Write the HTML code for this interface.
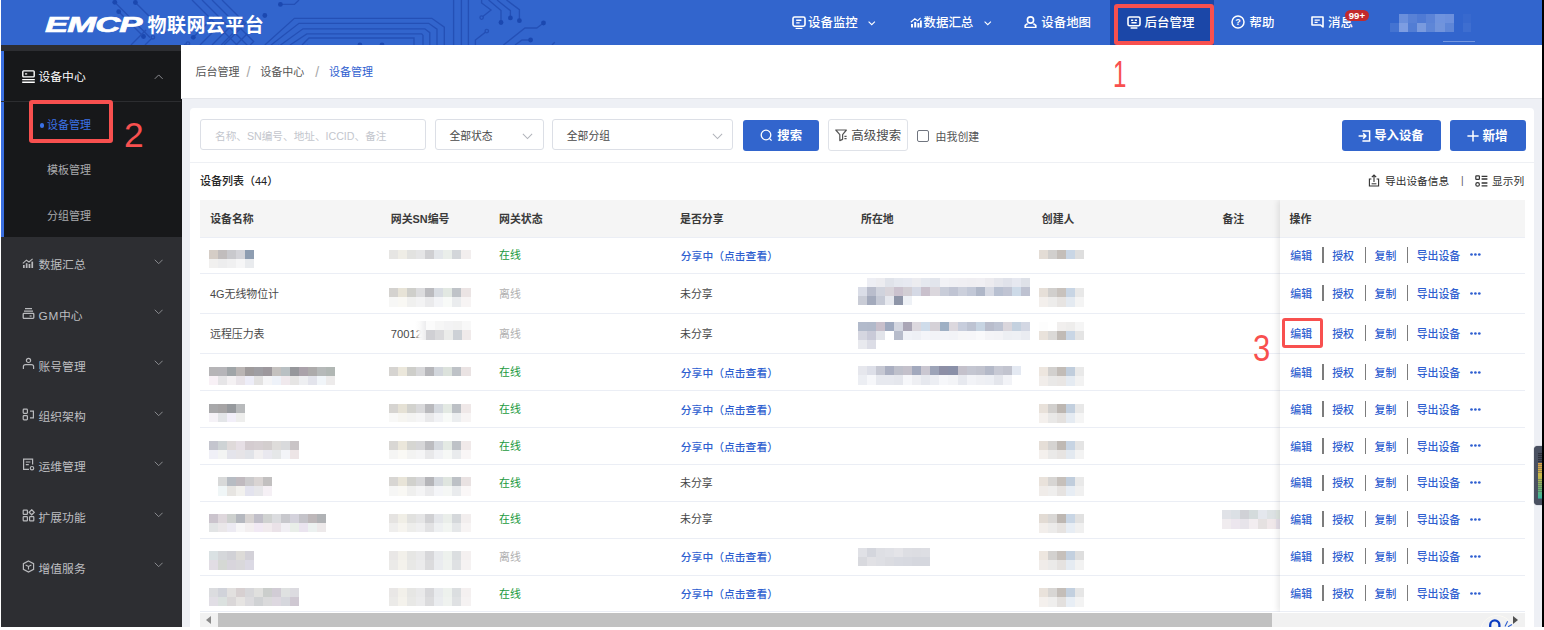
<!DOCTYPE html>
<html lang="zh-CN"><head><meta charset="utf-8"><title>EMCP 物联网云平台</title><style>
*{box-sizing:border-box;margin:0;padding:0}
html,body{width:1544px;height:630px;overflow:hidden;background:#fff}
body{font-family:"Liberation Sans","Noto Sans CJK SC",sans-serif;color:#333;position:relative;font-size:11px}
.a{position:absolute}
.t{position:absolute;white-space:nowrap;line-height:20px;height:20px}
#app{position:absolute;left:0;top:0;width:1542.3px;height:626.8px;background:#eef0f5;overflow:hidden}
#hd{position:absolute;left:0;top:0;width:1542.3px;height:44.9px;background:#3265cd;overflow:hidden}
#sb{position:absolute;left:0;top:45px;width:181.6px;height:582px;background:#2d2e32}
#sbact{position:absolute;left:0;top:5.6px;width:181.6px;height:186.2px;background:#17181a;border-left:4.3px solid #3a6fe0}
.nav{color:#fff;font-size:12.45px;font-weight:500}
.m1{color:#bdbec1;font-size:11.8px}
.m2{color:#a9aaad;font-size:11px}
.chev{position:absolute;width:9px;height:5px}
#bc{position:absolute;left:181px;top:45px;width:1361px;height:54px;background:#fff;border-bottom:1px solid #e3e5ea}
#card{position:absolute;left:190px;top:108px;width:1344px;height:530px;background:#fff;border-radius:4px}
.inp{position:absolute;top:119.3px;height:30.6px;border:1px solid #dcdfe6;border-radius:3px;background:#fff}
.btn{position:absolute;top:119.5px;height:31.4px;border-radius:3px;background:#3265cd}
.th{font-weight:700;color:#3a3a3a;font-size:10.9px}
.td{color:#484848;font-size:10.9px}
.on{color:#1b9a3e;font-size:10.9px}
.off{color:#b0b0b0;font-size:10.9px}
.lk{color:#2f5fd0;font-size:10.9px;font-weight:500}
.sep{position:absolute;width:1.4px;height:16px;background:#7c7c7c}
.hl{position:absolute;height:1px;background:#ebeef5}
.redbox{position:absolute;border:4px solid #f8504f;border-radius:2px}
.rednum{position:absolute;color:#f8504f;font-family:"Liberation Sans",sans-serif;white-space:nowrap}
</style></head><body>
<div id="app">
<div id="hd">
<svg class="a" style="left:0;top:0" width="1542" height="45" viewBox="0 0 1542 45" fill="none" stroke="#2450b6" stroke-width="1.35"><path d="M114.8 2.3 L150 37.5"/><circle cx="114.8" cy="2.3" r="2.4" fill="#1b48b0" stroke="none"/><path d="M118.7 11.7 L143.5 36.5"/><circle cx="118.7" cy="11.7" r="2.4" fill="#1b48b0" stroke="none"/><circle cx="143.5" cy="36.5" r="2.4" fill="#1b48b0" stroke="none"/><path d="M135.4 2.5 L166 33"/><circle cx="135.4" cy="2.5" r="2.4" fill="#1b48b0" stroke="none"/><path d="M131 45 L146 30"/><path d="M152.9 37.3 L145 45"/><circle cx="152.9" cy="37.3" r="1.7" fill="#3265cd"/><path d="M193.3 37.3 L214 16.6"/><circle cx="193.3" cy="37.3" r="2.4" fill="#1b48b0" stroke="none"/><path d="M187.9 43.5 L184 45"/><circle cx="187.9" cy="43.5" r="1.7" fill="#3265cd"/><path d="M192.0 0 L272.6 80.6 L308.2 45"/><path d="M202.0 0 L263.1 61.1 L279.2 45"/><path d="M212.0 0 L253.6 41.6 L250.2 45"/><path d="M222.0 0 L244.1 22.1 L221.2 45"/><circle cx="264.8" cy="15.5" r="2.4" fill="#1b48b0" stroke="none"/><path d="M200.0 45 L223.0 22"/><path d="M212.0 45 L235.0 22"/><path d="M224.0 45 L247.0 22"/><path d="M236.0 45 L259.0 22"/><path d="M280.4 4.4 H294.4 L299 0"/><circle cx="280.4" cy="4.4" r="2.4" fill="#1b48b0" stroke="none"/><path d="M264.8 45 L294.4 18.3 H431.8 L444.3 27.2 V45"/><path d="M271.0 45 L299.0 23.3 H428.7 L437.0 29.2 V45"/><path d="M280.5 45 L303.0 28.8 H424.8 L429.8 32.6 V45"/><path d="M290.0 45 L306.8 33.9 H421.7 L423.0 35.4 V45"/><path d="M302 45 L309 38 H414 V45"/><path d="M453.6 0 V45"/><path d="M461.4 0 V45"/><path d="M468.4 0 V45"/><circle cx="359.9" cy="45.0" r="2.4" fill="#1b48b0" stroke="none"/><circle cx="382.0" cy="45.0" r="2.4" fill="#1b48b0" stroke="none"/><path d="M481.6 0 V3 L491 10 L481.6 17.6"/><circle cx="481.6" cy="17.6" r="1.7" fill="#3265cd"/><path d="M488.6 0 L501 10.6 V22.5"/><circle cx="501.0" cy="22.5" r="2.4" fill="#1b48b0" stroke="none"/><path d="M497 0 L510.4 10.6 V17.9"/><circle cx="510.4" cy="17.9" r="2.4" fill="#1b48b0" stroke="none"/><path d="M506.5 0 L519.4 9.6 V20.7"/><circle cx="519.4" cy="20.7" r="2.4" fill="#1b48b0" stroke="none"/><path d="M486.8 31.1 L475.4 40 V45"/><circle cx="486.8" cy="31.1" r="1.7" fill="#3265cd"/><path d="M543.5 23 L536.8 28 H525 L503.4 45"/><circle cx="543.5" cy="23.0" r="2.4" fill="#1b48b0" stroke="none"/><path d="M530.6 40 H522 L515 45"/><circle cx="530.6" cy="40.0" r="2.4" fill="#1b48b0" stroke="none"/><path d="M554.7 42.3 L552 45"/></svg>
<div class="a" style="left:45px;top:12.6px;height:24px;line-height:24px;color:#fff;font-weight:700;font-style:italic;font-size:22.5px;transform-origin:0 50%;transform:scaleX(1.54);letter-spacing:-0.6px;white-space:nowrap;-webkit-text-stroke:0.7px #fff">EMCP</div>
<div class="a" style="left:147.5px;top:13.7px;height:24px;line-height:24px;color:#fff;font-weight:700;font-size:19px;white-space:nowrap;letter-spacing:0.45px">物联网云平台</div>
<div class="a" style="left:1110px;top:0;width:103.6px;height:45px;background:#1b47a8"></div>
<svg class="a" style="left:791.8px;top:15.7px" width="14" height="13.5" viewBox="0 0 14 13.5" fill="none" stroke="#fff" stroke-width="1.6"><rect x="1" y="1" width="12" height="9.2" rx="1.6"/><path d="M3.6 12.6h6.8" stroke-width="1.5"/><path d="M4.2 4.3h5.2M4.2 6.9h3.4" stroke-width="1.4"/></svg>
<div class="t nav" style="left:808.0px;top:12.9px;">设备监控</div>
<svg class="a" style="left:868.0px;top:21.0px" width="7.5" height="4.5" viewBox="0 0 10 6" fill="none" stroke="#fff" stroke-width="1.47"><path d="M0.8 0.8 L5 5 L9.2 0.8"/></svg>
<svg class="a" style="left:909.6px;top:17.2px" width="12" height="11" viewBox="0 0 12 11" fill="#fff" stroke="none"><rect x="1" y="7" width="2" height="3.5"/><rect x="4.2" y="5" width="2" height="5.5"/><rect x="7.4" y="6" width="2" height="4.5"/><rect x="10" y="3.5" width="1.8" height="7"/><path d="M0.8 5.2 L4.8 1.8 L7.6 3.8 L10.6 0.8" fill="none" stroke="#fff" stroke-width="1.2"/></svg>
<div class="t nav" style="left:923.5px;top:12.9px;">数据汇总</div>
<svg class="a" style="left:984.0px;top:21.0px" width="7.5" height="4.5" viewBox="0 0 10 6" fill="none" stroke="#fff" stroke-width="1.47"><path d="M0.8 0.8 L5 5 L9.2 0.8"/></svg>
<svg class="a" style="left:1023.7px;top:15.8px" width="13" height="12.5" viewBox="0 0 13 12.5" fill="none" stroke="#fff" stroke-width="1.6"><circle cx="6.5" cy="4" r="3.1"/><path d="M3.6 7.6 L1.2 9.4 V11.5 H11.8 V9.4 L9.4 7.6" stroke-linejoin="round"/></svg>
<div class="t nav" style="left:1041.3px;top:12.9px;">设备地图</div>
<svg class="a" style="left:1127.0px;top:15.6px" width="14" height="13" viewBox="0 0 14 13" fill="none" stroke="#fff" stroke-width="1.6"><rect x="1" y="1" width="12" height="8.8" rx="1.6"/><path d="M3.6 12h6.8" stroke-width="1.5"/><path d="M4 4.2h2.2M7.8 4.2h2.2M4.4 6.7h5.2" stroke-width="1.5"/></svg>
<div class="t nav" style="left:1144.6px;top:12.9px;">后台管理</div>
<svg class="a" style="left:1231.0px;top:15.2px" width="14" height="14" viewBox="0 0 14 14" fill="none" stroke="#fff" stroke-width="1.5"><circle cx="7" cy="7" r="6"/><text x="7" y="10.2" font-size="9" font-weight="700" text-anchor="middle" fill="#fff" stroke="none" font-family="Liberation Sans,sans-serif">?</text></svg>
<div class="t nav" style="left:1249.6px;top:12.9px;">帮助</div>
<svg class="a" style="left:1310.8px;top:15.6px" width="13" height="12" viewBox="0 0 13 12" fill="none" stroke="#fff" stroke-width="1.6"><path d="M1 1 H12 V11 L9.6 9 H1 Z" stroke-linejoin="round"/><path d="M3.6 4.2h5.2M3.6 6.4h3" stroke-width="1.3"/></svg>
<div class="t nav" style="left:1328.0px;top:12.9px;">消息</div>
<div class="a" style="left:1344.6px;top:9.6px;width:24.6px;height:11.3px;border-radius:6px;background:#c32a2c;color:#fff;font-size:9.6px;font-weight:700;line-height:11.6px;text-align:center">99+</div>
<svg class="a" style="left:1389.5px;top:14.0px" width="81.9" height="17.6" viewBox="0 0 81.9 17.6" shape-rendering="crispEdges"><rect x="9.1" y="0.0" width="9.3" height="9.0" fill="#6a8fdc"/><rect x="18.2" y="0.0" width="9.3" height="9.0" fill="#5881d6"/><rect x="27.3" y="0.0" width="9.3" height="9.0" fill="#4f7ad4"/><rect x="36.4" y="0.0" width="9.3" height="9.0" fill="#5b83d7"/><rect x="45.5" y="0.0" width="9.3" height="9.0" fill="#6f93de"/><rect x="54.6" y="0.0" width="9.3" height="9.0" fill="#6c90dd"/><rect x="72.8" y="0.0" width="9.3" height="9.0" fill="#3869ce"/><rect x="0.0" y="8.8" width="9.3" height="9.0" fill="#4473d1"/><rect x="9.1" y="8.8" width="9.3" height="9.0" fill="#7d9de2"/><rect x="18.2" y="8.8" width="9.3" height="9.0" fill="#527dd4"/><rect x="27.3" y="8.8" width="9.3" height="9.0" fill="#799ade"/><rect x="36.4" y="8.8" width="9.3" height="9.0" fill="#5e86d7"/><rect x="45.5" y="8.8" width="9.3" height="9.0" fill="#7194dc"/><rect x="54.6" y="8.8" width="9.3" height="9.0" fill="#5e86d7"/><rect x="72.8" y="8.8" width="9.3" height="9.0" fill="#3e6ed0"/></svg>
<div class="a" style="left:1443px;top:41px;width:32px;height:1px;background:#86a4e4;opacity:.8"></div>
<div class="redbox" style="left:1114.1px;top:3.8px;width:100px;height:41.2px;border-radius:3px"></div>
</div>
<div id="sb"><div id="sbact"></div></div>
<div class="a" style="left:0;top:101px;width:181px;height:1px;background:#2c2d30"></div>
<svg class="a" style="left:21.8px;top:69.6px" width="13" height="13" viewBox="0 0 13 13" fill="none" stroke="#fff" stroke-width="1.2"><rect x="0.8" y="0.9" width="11.4" height="6" rx="0.8" stroke-width="1.4"/><path d="M3 3.9h2.2" stroke-width="1.2"/><path d="M0.2 9.6h12.6M0.2 12.3h12.6" stroke-width="1.4"/></svg>
<div class="t m1" style="left:38.5px;top:67.2px;color:#fff;font-weight:400">设备中心</div>
<svg class="a" style="left:154.0px;top:73.6px" width="9.4" height="5.6" viewBox="0 0 10 6" fill="none" stroke="#8c8d91" stroke-width="1.06"><path d="M0.8 5.2 L5 1 L9.2 5.2"/></svg>
<div class="a" style="left:40.1px;top:123.3px;width:4.4px;height:4.4px;border-radius:50%;background:#3b72e6"></div>
<div class="t m2" style="left:47.0px;top:114.5px;color:#3b72e6">设备管理</div>
<div class="t m2" style="left:47.0px;top:160.0px;">模板管理</div>
<div class="t m2" style="left:47.0px;top:206.0px;">分组管理</div>
<svg class="a" style="left:21.8px;top:255.8px" width="13" height="13" viewBox="0 0 13 13" fill="none" stroke="#b9babd" stroke-width="1.2"><g fill="#b9babd" stroke="none"><rect x="1" y="9" width="1.7" height="3"/><rect x="3.8" y="7.2" width="1.7" height="4.8"/><rect x="6.6" y="8" width="1.7" height="4"/><rect x="9.4" y="5.6" width="1.7" height="6.4"/></g><path d="M0.8 7.4 L4.4 4.2 L7 6 L10.6 2.8" stroke-width="1.1"/></svg>
<div class="t m1" style="left:38.5px;top:254.9px;">数据汇总</div>
<svg class="a" style="left:154.0px;top:258.5px" width="9.4" height="5.6" viewBox="0 0 10 6" fill="none" stroke="#8c8d91" stroke-width="1.06"><path d="M0.8 0.8 L5 5 L9.2 0.8"/></svg>
<svg class="a" style="left:21.8px;top:306.5px" width="13" height="13" viewBox="0 0 13 13" fill="none" stroke="#b9babd" stroke-width="1.2"><path d="M3 1.6h7M2 4.2h9" stroke-width="1.3"/><rect x="1.2" y="6.4" width="10.6" height="5" rx="0.8" stroke-width="1.3"/><path d="M7.6 9h2" stroke-width="1.2"/></svg>
<div class="t m1" style="left:38.5px;top:305.6px;"><span style="letter-spacing:.7px">GM</span>中心</div>
<svg class="a" style="left:154.0px;top:309.2px" width="9.4" height="5.6" viewBox="0 0 10 6" fill="none" stroke="#8c8d91" stroke-width="1.06"><path d="M0.8 0.8 L5 5 L9.2 0.8"/></svg>
<svg class="a" style="left:21.8px;top:357.4px" width="13" height="13" viewBox="0 0 13 13" fill="none" stroke="#b9babd" stroke-width="1.2"><circle cx="6.5" cy="3.4" r="2.1"/><path d="M1.4 12 V9.6 Q1.4 7.6 3.6 7.6 H9.4 Q11.6 7.6 11.6 9.6 V12"/></svg>
<div class="t m1" style="left:38.5px;top:356.5px;">账号管理</div>
<svg class="a" style="left:154.0px;top:360.1px" width="9.4" height="5.6" viewBox="0 0 10 6" fill="none" stroke="#8c8d91" stroke-width="1.06"><path d="M0.8 0.8 L5 5 L9.2 0.8"/></svg>
<svg class="a" style="left:21.8px;top:407.8px" width="13" height="13" viewBox="0 0 13 13" fill="none" stroke="#b9babd" stroke-width="1.2"><rect x="1.2" y="1.2" width="4.2" height="4.2" rx="0.8"/><rect x="1.2" y="7.6" width="4.2" height="4.2" rx="0.8"/><path d="M8 3.2 H11.4 V9.8 H8"/></svg>
<div class="t m1" style="left:38.5px;top:406.9px;">组织架构</div>
<svg class="a" style="left:154.0px;top:410.5px" width="9.4" height="5.6" viewBox="0 0 10 6" fill="none" stroke="#8c8d91" stroke-width="1.06"><path d="M0.8 0.8 L5 5 L9.2 0.8"/></svg>
<svg class="a" style="left:21.8px;top:458.3px" width="13" height="13" viewBox="0 0 13 13" fill="none" stroke="#b9babd" stroke-width="1.2"><path d="M10.6 6.4 V1.2 H1.6 V11.4 H7"/><path d="M3.8 4h4.6M3.8 6.6h3" stroke-width="1.1"/><circle cx="10" cy="10.2" r="1.7"/></svg>
<div class="t m1" style="left:38.5px;top:457.4px;">运维管理</div>
<svg class="a" style="left:154.0px;top:461.0px" width="9.4" height="5.6" viewBox="0 0 10 6" fill="none" stroke="#8c8d91" stroke-width="1.06"><path d="M0.8 0.8 L5 5 L9.2 0.8"/></svg>
<svg class="a" style="left:21.8px;top:508.9px" width="13" height="13" viewBox="0 0 13 13" fill="none" stroke="#b9babd" stroke-width="1.2"><rect x="1.2" y="1.2" width="4.2" height="4.2" rx="0.6"/><rect x="1.2" y="7.6" width="4.2" height="4.2" rx="0.6"/><rect x="7.6" y="7.6" width="4.2" height="4.2" rx="0.6"/><path d="M9.7 0.8 L12.3 3.3 L9.7 5.8 L7.1 3.3 Z"/></svg>
<div class="t m1" style="left:38.5px;top:508.0px;">扩展功能</div>
<svg class="a" style="left:154.0px;top:511.6px" width="9.4" height="5.6" viewBox="0 0 10 6" fill="none" stroke="#8c8d91" stroke-width="1.06"><path d="M0.8 0.8 L5 5 L9.2 0.8"/></svg>
<svg class="a" style="left:21.8px;top:559.5px" width="13" height="13" viewBox="0 0 13 13" fill="none" stroke="#b9babd" stroke-width="1.2"><path d="M6.5 1 L11.6 3.6 V9.4 L6.5 12 L1.4 9.4 V3.6 Z"/><path d="M3.6 5 L6.5 6.5 L9.4 5 M6.5 6.5 V9.6" stroke-width="1.1"/></svg>
<div class="t m1" style="left:38.5px;top:558.6px;">增值服务</div>
<svg class="a" style="left:154.0px;top:562.2px" width="9.4" height="5.6" viewBox="0 0 10 6" fill="none" stroke="#8c8d91" stroke-width="1.06"><path d="M0.8 0.8 L5 5 L9.2 0.8"/></svg>
<div class="redbox" style="left:29.2px;top:100.2px;width:84.2px;height:43.3px;border-radius:3px"></div>
<div class="rednum" style="left:124px;top:113.2px;font-size:35.4px;line-height:44px;transform-origin:0 50%;transform:scaleX(1.0)">2</div>
<div id="bc"></div>
<div class="t " style="left:195.5px;top:61.7px;color:#555;font-size:11px">后台管理</div>
<div class="t " style="left:246.6px;top:61.7px;color:#a8a8a8;font-size:14px">/</div>
<div class="t " style="left:260.3px;top:61.7px;color:#555;font-size:11px">设备中心</div>
<div class="t " style="left:315.2px;top:61.7px;color:#a8a8a8;font-size:14px">/</div>
<div class="t " style="left:329.0px;top:61.7px;color:#2f5fd0;font-size:11px">设备管理</div>
<div class="rednum" style="left:1113px;top:53.2px;font-size:36.5px;line-height:44px;transform-origin:0 50%;transform:scaleX(0.66)">1</div>
<div id="card"></div>
<div class="inp" style="left:200px;width:226px"></div>
<div class="t " style="left:215.0px;top:126.0px;color:#c3c6cd;font-size:10.65px">名称、SN编号、地址、ICCID、备注</div>
<div class="inp" style="left:435px;width:109px"></div>
<div class="t " style="left:449.4px;top:126.0px;color:#4a4a4a;font-size:10.8px">全部状态</div>
<svg class="a" style="left:521.8px;top:133.2px" width="11.0" height="6.6" viewBox="0 0 10 6" fill="none" stroke="#b0b3ba" stroke-width="0.91"><path d="M0.8 0.8 L5 5 L9.2 0.8"/></svg>
<div class="inp" style="left:552px;width:181px"></div>
<div class="t " style="left:566.8px;top:126.0px;color:#4a4a4a;font-size:10.8px">全部分组</div>
<svg class="a" style="left:712.2px;top:133.2px" width="11.0" height="6.6" viewBox="0 0 10 6" fill="none" stroke="#b0b3ba" stroke-width="0.91"><path d="M0.8 0.8 L5 5 L9.2 0.8"/></svg>
<div class="btn" style="left:743px;width:76px"></div>
<svg class="a" style="left:759.5px;top:129px" width="13" height="13" viewBox="0 0 13 13" fill="none" stroke="#fff" stroke-width="1.3"><circle cx="6" cy="6" r="4.8"/><path d="M9.6 9.6 L11.6 11.6"/></svg>
<div class="t " style="left:777.3px;top:125.6px;color:#fff;font-weight:700;font-size:12.4px">搜索</div>
<div class="inp" style="left:828.2px;width:79.6px;height:31.8px;border-color:#dfe2e8"></div>
<svg class="a" style="left:834.6px;top:129.4px" width="13" height="13" viewBox="0 0 13 13" fill="none" stroke="#555" stroke-width="1.2"><path d="M0.8 1 H11.4 L7.6 5.6 V10.4 L4.8 11.6 V5.6 Z" stroke-linejoin="round"/><path d="M9.4 7.4h2.2M9.4 9.6h2.2" stroke-width="1.1"/></svg>
<div class="t " style="left:851.2px;top:125.8px;color:#4c4c4c;font-weight:400;font-size:12.5px">高级搜索</div>
<div class="a" style="left:917px;top:130px;width:12.4px;height:12.2px;border:1.2px solid #70757f;border-radius:2px;background:#fff"></div>
<div class="t " style="left:935.6px;top:126.6px;color:#555;font-size:10.9px">由我创建</div>
<div class="btn" style="left:1341.5px;width:99.5px"></div>
<svg class="a" style="left:1357.5px;top:129.5px" width="13" height="12" viewBox="0 0 13 12" fill="none" stroke="#fff" stroke-width="1.5"><path d="M4.4 1 H11.6 V11 H4.4"/><path d="M0.6 6 H7.6 M5.2 3.4 L7.8 6 L5.2 8.6"/></svg>
<div class="t " style="left:1374.2px;top:125.6px;color:#fff;font-weight:700;font-size:12.4px">导入设备</div>
<div class="btn" style="left:1450px;width:75.5px"></div>
<svg class="a" style="left:1467px;top:130px" width="12" height="12" viewBox="0 0 12 12" fill="none" stroke="#fff" stroke-width="1.5"><path d="M6 0.4 V11.6 M0.4 6 H11.6"/></svg>
<div class="t " style="left:1482.4px;top:125.6px;color:#fff;font-weight:700;font-size:12.6px">新增</div>
<div class="hl" style="left:190px;top:162px;width:1344px;background:#eef0f4"></div>
<div class="t " style="left:200.0px;top:170.9px;color:#222;font-weight:500;font-size:11px">设备列表（44）</div>
<svg class="a" style="left:1368px;top:174px" width="12" height="13" viewBox="0 0 12 13" fill="none" stroke="#333" stroke-width="1.1"><path d="M3.4 5 H1.4 V12 H10.6 V5 H8.6"/><path d="M6 8 V1.2 M3.8 3.2 L6 1 L8.2 3.2"/><path d="M3.6 9.8h4.8" stroke-width="1"/></svg>
<div class="t " style="left:1385.0px;top:171.0px;color:#2e2e2e;font-weight:400;font-size:10.7px">导出设备信息</div>
<div class="t " style="left:1461.0px;top:170.5px;color:#555;font-size:10px">|</div>
<svg class="a" style="left:1475px;top:174.5px" width="13" height="12" viewBox="0 0 13 12" fill="none" stroke="#333" stroke-width="1.2"><rect x="0.8" y="0.8" width="3.6" height="3.6" rx="0.6"/><circle cx="2.6" cy="9.4" r="1.8"/><path d="M6.6 1.4h5.8M6.6 4h5.8M6.6 8h5.8M6.6 10.8h5.8" stroke-width="1.3"/></svg>
<div class="t " style="left:1492.0px;top:171.0px;color:#2e2e2e;font-weight:400;font-size:10.7px">显示列</div>
<div class="a" style="left:200px;top:200px;width:1325px;height:37px;background:#f5f5f5"></div>
<div class="t th" style="left:210.2px;top:208.5px;">设备名称</div>
<div class="t th" style="left:390.8px;top:208.5px;">网关SN编号</div>
<div class="t th" style="left:499.0px;top:208.5px;">网关状态</div>
<div class="t th" style="left:680.0px;top:208.5px;">是否分享</div>
<div class="t th" style="left:861.0px;top:208.5px;">所在地</div>
<div class="t th" style="left:1041.8px;top:208.5px;">创建人</div>
<div class="t th" style="left:1222.4px;top:208.5px;">备注</div>
<div class="hl" style="left:200px;top:236.9px;width:1325px"></div>
<div class="hl" style="left:200px;top:272.9px;width:1325px"></div>
<div class="hl" style="left:200px;top:312.9px;width:1325px"></div>
<div class="hl" style="left:200px;top:353.4px;width:1325px"></div>
<div class="hl" style="left:200px;top:390.2px;width:1325px"></div>
<div class="hl" style="left:200px;top:427.4px;width:1325px"></div>
<div class="hl" style="left:200px;top:464.2px;width:1325px"></div>
<div class="hl" style="left:200px;top:500.5px;width:1325px"></div>
<div class="hl" style="left:200px;top:537.6px;width:1325px"></div>
<div class="hl" style="left:200px;top:574.6px;width:1325px"></div>
<div class="hl" style="left:200px;top:611.3px;width:1325px"></div>
<div class="t on" style="left:499.0px;top:245.2px;">在线</div>
<div class="t lk" style="left:680.8px;top:246.0px;font-size:10.75px;font-weight:500;letter-spacing:0.05px">分享中（点击查看）</div>
<div class="t td" style="left:210.0px;top:283.6px;">4G无线物位计</div>
<div class="t off" style="left:499.0px;top:283.6px;">离线</div>
<div class="t td" style="left:680.0px;top:283.6px;">未分享</div>
<div class="t td" style="left:210.0px;top:323.6px;">远程压力表</div>
<div class="t off" style="left:499.0px;top:323.6px;">离线</div>
<div class="t td" style="left:680.0px;top:323.6px;">未分享</div>
<div class="t on" style="left:499.0px;top:362.4px;">在线</div>
<div class="t lk" style="left:680.8px;top:363.2px;font-size:10.75px;font-weight:500;letter-spacing:0.05px">分享中（点击查看）</div>
<div class="t on" style="left:499.0px;top:399.4px;">在线</div>
<div class="t lk" style="left:680.8px;top:400.2px;font-size:10.75px;font-weight:500;letter-spacing:0.05px">分享中（点击查看）</div>
<div class="t on" style="left:499.0px;top:436.2px;">在线</div>
<div class="t lk" style="left:680.8px;top:437.0px;font-size:10.75px;font-weight:500;letter-spacing:0.05px">分享中（点击查看）</div>
<div class="t on" style="left:499.0px;top:472.7px;">在线</div>
<div class="t td" style="left:680.0px;top:472.7px;">未分享</div>
<div class="t on" style="left:499.0px;top:509.4px;">在线</div>
<div class="t td" style="left:680.0px;top:509.4px;">未分享</div>
<div class="t off" style="left:499.0px;top:546.6px;">离线</div>
<div class="t lk" style="left:680.8px;top:547.4px;font-size:10.75px;font-weight:500;letter-spacing:0.05px">分享中（点击查看）</div>
<div class="t on" style="left:499.0px;top:583.5px;">在线</div>
<div class="t lk" style="left:680.8px;top:584.3px;font-size:10.75px;font-weight:500;letter-spacing:0.05px">分享中（点击查看）</div>
<svg class="a" style="left:209.4px;top:249.8px" width="45.0" height="18.4" viewBox="0 0 45.0 18.4" shape-rendering="crispEdges"><rect x="0.0" y="0.0" width="9.2" height="9.4" fill="#d5cdc6"/><rect x="9.0" y="0.0" width="9.2" height="9.4" fill="#c1bdbd"/><rect x="18.0" y="0.0" width="9.2" height="9.4" fill="#c9c9cd"/><rect x="27.0" y="0.0" width="9.2" height="9.4" fill="#d4d4d9"/><rect x="36.0" y="0.0" width="9.2" height="9.4" fill="#8e9db1"/><rect x="0.0" y="9.2" width="9.2" height="9.4" fill="#f1f0ef"/><rect x="9.0" y="9.2" width="9.2" height="9.4" fill="#ededee"/><rect x="18.0" y="9.2" width="9.2" height="9.4" fill="#f0f0f1"/><rect x="27.0" y="9.2" width="9.2" height="9.4" fill="#f6f6f7"/><rect x="36.0" y="9.2" width="9.2" height="9.4" fill="#e9ebee"/></svg>
<svg class="a" style="left:209.4px;top:367.0px" width="126.0" height="18.4" viewBox="0 0 126.0 18.4" shape-rendering="crispEdges"><rect x="0.0" y="0.0" width="9.2" height="9.4" fill="#b6b5b7"/><rect x="9.0" y="0.0" width="9.2" height="9.4" fill="#b6b5b9"/><rect x="18.0" y="0.0" width="9.2" height="9.4" fill="#a0a5a8"/><rect x="27.0" y="0.0" width="9.2" height="9.4" fill="#bab5b4"/><rect x="36.0" y="0.0" width="9.2" height="9.4" fill="#9f9b9c"/><rect x="45.0" y="0.0" width="9.2" height="9.4" fill="#9f9ea3"/><rect x="54.0" y="0.0" width="9.2" height="9.4" fill="#9d989d"/><rect x="63.0" y="0.0" width="9.2" height="9.4" fill="#c4c1bf"/><rect x="72.0" y="0.0" width="9.2" height="9.4" fill="#b9c0c3"/><rect x="81.0" y="0.0" width="9.2" height="9.4" fill="#96979b"/><rect x="90.0" y="0.0" width="9.2" height="9.4" fill="#aaa2aa"/><rect x="99.0" y="0.0" width="9.2" height="9.4" fill="#adabab"/><rect x="108.0" y="0.0" width="9.2" height="9.4" fill="#b6b9b9"/><rect x="117.0" y="0.0" width="9.2" height="9.4" fill="#b1b7b4"/><rect x="0.0" y="9.2" width="9.2" height="9.4" fill="#f8f1f6"/><rect x="9.0" y="9.2" width="9.2" height="9.4" fill="#e6e5e7"/><rect x="18.0" y="9.2" width="9.2" height="9.4" fill="#f4f1f3"/><rect x="27.0" y="9.2" width="9.2" height="9.4" fill="#e9e4e9"/><rect x="36.0" y="9.2" width="9.2" height="9.4" fill="#ededf8"/><rect x="45.0" y="9.2" width="9.2" height="9.4" fill="#e3e2e2"/><rect x="54.0" y="9.2" width="9.2" height="9.4" fill="#f5f5f7"/><rect x="63.0" y="9.2" width="9.2" height="9.4" fill="#eef2f9"/><rect x="72.0" y="9.2" width="9.2" height="9.4" fill="#f0e9ed"/><rect x="81.0" y="9.2" width="9.2" height="9.4" fill="#e6e5e4"/><rect x="90.0" y="9.2" width="9.2" height="9.4" fill="#eeeff2"/><rect x="99.0" y="9.2" width="9.2" height="9.4" fill="#e3e4ec"/><rect x="108.0" y="9.2" width="9.2" height="9.4" fill="#f1f5f9"/><rect x="117.0" y="9.2" width="9.2" height="9.4" fill="#edebeb"/></svg>
<svg class="a" style="left:209.4px;top:404.0px" width="36.0" height="18.4" viewBox="0 0 36.0 18.4" shape-rendering="crispEdges"><rect x="0.0" y="0.0" width="9.2" height="9.4" fill="#a8a8aa"/><rect x="9.0" y="0.0" width="9.2" height="9.4" fill="#a6a4a5"/><rect x="18.0" y="0.0" width="9.2" height="9.4" fill="#96999d"/><rect x="27.0" y="0.0" width="9.2" height="9.4" fill="#b8babc"/><rect x="0.0" y="9.2" width="9.2" height="9.4" fill="#f5f2f7"/><rect x="9.0" y="9.2" width="9.2" height="9.4" fill="#e3e5e8"/><rect x="18.0" y="9.2" width="9.2" height="9.4" fill="#f2eff9"/><rect x="27.0" y="9.2" width="9.2" height="9.4" fill="#eeeeed"/></svg>
<svg class="a" style="left:209.4px;top:440.8px" width="90.0" height="18.4" viewBox="0 0 90.0 18.4" shape-rendering="crispEdges"><rect x="0.0" y="0.0" width="9.2" height="9.4" fill="#c4c5ce"/><rect x="9.0" y="0.0" width="9.2" height="9.4" fill="#ced3d5"/><rect x="18.0" y="0.0" width="9.2" height="9.4" fill="#dfdada"/><rect x="27.0" y="0.0" width="9.2" height="9.4" fill="#e6dfe5"/><rect x="36.0" y="0.0" width="9.2" height="9.4" fill="#d4ccd0"/><rect x="45.0" y="0.0" width="9.2" height="9.4" fill="#d6cfd2"/><rect x="54.0" y="0.0" width="9.2" height="9.4" fill="#d3cece"/><rect x="63.0" y="0.0" width="9.2" height="9.4" fill="#dedcda"/><rect x="72.0" y="0.0" width="9.2" height="9.4" fill="#d9dadc"/><rect x="81.0" y="0.0" width="9.2" height="9.4" fill="#c9c4c6"/><rect x="0.0" y="9.2" width="9.2" height="9.4" fill="#f0f0f7"/><rect x="9.0" y="9.2" width="9.2" height="9.4" fill="#f3f4f3"/><rect x="18.0" y="9.2" width="9.2" height="9.4" fill="#e4e4eb"/><rect x="27.0" y="9.2" width="9.2" height="9.4" fill="#e6e4e7"/><rect x="36.0" y="9.2" width="9.2" height="9.4" fill="#e1e3e8"/><rect x="45.0" y="9.2" width="9.2" height="9.4" fill="#f1eff0"/><rect x="54.0" y="9.2" width="9.2" height="9.4" fill="#e9e8ef"/><rect x="63.0" y="9.2" width="9.2" height="9.4" fill="#e5e7e8"/><rect x="72.0" y="9.2" width="9.2" height="9.4" fill="#f3f4f8"/><rect x="81.0" y="9.2" width="9.2" height="9.4" fill="#ede5e6"/></svg>
<svg class="a" style="left:218.0px;top:477.3px" width="54.0" height="18.4" viewBox="0 0 54.0 18.4" shape-rendering="crispEdges"><rect x="0.0" y="0.0" width="9.2" height="9.4" fill="#d8d9d9"/><rect x="9.0" y="0.0" width="9.2" height="9.4" fill="#b7bcc3"/><rect x="18.0" y="0.0" width="9.2" height="9.4" fill="#c0babf"/><rect x="27.0" y="0.0" width="9.2" height="9.4" fill="#cbcacc"/><rect x="36.0" y="0.0" width="9.2" height="9.4" fill="#d9d4d3"/><rect x="45.0" y="0.0" width="9.2" height="9.4" fill="#c2c0c0"/><rect x="0.0" y="9.2" width="9.2" height="9.4" fill="#f0f6f7"/><rect x="9.0" y="9.2" width="9.2" height="9.4" fill="#e7e5e2"/><rect x="18.0" y="9.2" width="9.2" height="9.4" fill="#f2f1ee"/><rect x="27.0" y="9.2" width="9.2" height="9.4" fill="#e3e3ee"/><rect x="36.0" y="9.2" width="9.2" height="9.4" fill="#e7e7ea"/><rect x="45.0" y="9.2" width="9.2" height="9.4" fill="#f5f0f5"/></svg>
<svg class="a" style="left:209.4px;top:514.0px" width="117.0" height="18.4" viewBox="0 0 117.0 18.4" shape-rendering="crispEdges"><rect x="0.0" y="0.0" width="9.2" height="9.4" fill="#cbc4cd"/><rect x="9.0" y="0.0" width="9.2" height="9.4" fill="#ded7dc"/><rect x="18.0" y="0.0" width="9.2" height="9.4" fill="#cdd0ce"/><rect x="27.0" y="0.0" width="9.2" height="9.4" fill="#b5b8bf"/><rect x="36.0" y="0.0" width="9.2" height="9.4" fill="#d7d3d2"/><rect x="45.0" y="0.0" width="9.2" height="9.4" fill="#c1bfc9"/><rect x="54.0" y="0.0" width="9.2" height="9.4" fill="#d0d2d1"/><rect x="63.0" y="0.0" width="9.2" height="9.4" fill="#dbdcdf"/><rect x="72.0" y="0.0" width="9.2" height="9.4" fill="#c8c8cd"/><rect x="81.0" y="0.0" width="9.2" height="9.4" fill="#d4d2dc"/><rect x="90.0" y="0.0" width="9.2" height="9.4" fill="#c4c3c9"/><rect x="99.0" y="0.0" width="9.2" height="9.4" fill="#bdb7b9"/><rect x="108.0" y="0.0" width="9.2" height="9.4" fill="#b0b2b5"/><rect x="0.0" y="9.2" width="9.2" height="9.4" fill="#e2e4e5"/><rect x="9.0" y="9.2" width="9.2" height="9.4" fill="#eae7e9"/><rect x="18.0" y="9.2" width="9.2" height="9.4" fill="#eceaf2"/><rect x="27.0" y="9.2" width="9.2" height="9.4" fill="#f7f6f7"/><rect x="36.0" y="9.2" width="9.2" height="9.4" fill="#f3eff0"/><rect x="45.0" y="9.2" width="9.2" height="9.4" fill="#f1e9f4"/><rect x="54.0" y="9.2" width="9.2" height="9.4" fill="#f1ebee"/><rect x="63.0" y="9.2" width="9.2" height="9.4" fill="#eae2e8"/><rect x="72.0" y="9.2" width="9.2" height="9.4" fill="#f1eff4"/><rect x="81.0" y="9.2" width="9.2" height="9.4" fill="#e9eee9"/><rect x="90.0" y="9.2" width="9.2" height="9.4" fill="#eae4ef"/><rect x="99.0" y="9.2" width="9.2" height="9.4" fill="#ecf1f0"/><rect x="108.0" y="9.2" width="9.2" height="9.4" fill="#ede9ea"/></svg>
<svg class="a" style="left:209.4px;top:551.2px" width="45.0" height="18.4" viewBox="0 0 45.0 18.4" shape-rendering="crispEdges"><rect x="0.0" y="0.0" width="9.2" height="9.4" fill="#dae1e3"/><rect x="9.0" y="0.0" width="9.2" height="9.4" fill="#d5d7da"/><rect x="18.0" y="0.0" width="9.2" height="9.4" fill="#d1d1d6"/><rect x="27.0" y="0.0" width="9.2" height="9.4" fill="#dddbd8"/><rect x="36.0" y="0.0" width="9.2" height="9.4" fill="#d3d1d8"/><rect x="0.0" y="9.2" width="9.2" height="9.4" fill="#e1dde4"/><rect x="9.0" y="9.2" width="9.2" height="9.4" fill="#d5d8d4"/><rect x="18.0" y="9.2" width="9.2" height="9.4" fill="#d8d5dc"/><rect x="27.0" y="9.2" width="9.2" height="9.4" fill="#d9d8db"/><rect x="36.0" y="9.2" width="9.2" height="9.4" fill="#dbd9e4"/></svg>
<svg class="a" style="left:209.4px;top:588.1px" width="90.0" height="18.4" viewBox="0 0 90.0 18.4" shape-rendering="crispEdges"><rect x="0.0" y="0.0" width="9.2" height="9.4" fill="#dbdcdf"/><rect x="9.0" y="0.0" width="9.2" height="9.4" fill="#d1d3da"/><rect x="18.0" y="0.0" width="9.2" height="9.4" fill="#e2e0df"/><rect x="27.0" y="0.0" width="9.2" height="9.4" fill="#d7d0d1"/><rect x="36.0" y="0.0" width="9.2" height="9.4" fill="#d7d7da"/><rect x="45.0" y="0.0" width="9.2" height="9.4" fill="#e0e0de"/><rect x="54.0" y="0.0" width="9.2" height="9.4" fill="#cbcecc"/><rect x="63.0" y="0.0" width="9.2" height="9.4" fill="#d1ccd5"/><rect x="72.0" y="0.0" width="9.2" height="9.4" fill="#dfe1e1"/><rect x="81.0" y="0.0" width="9.2" height="9.4" fill="#dcdbe0"/><rect x="0.0" y="9.2" width="9.2" height="9.4" fill="#e1dee5"/><rect x="9.0" y="9.2" width="9.2" height="9.4" fill="#dbe1df"/><rect x="18.0" y="9.2" width="9.2" height="9.4" fill="#dad7d8"/><rect x="27.0" y="9.2" width="9.2" height="9.4" fill="#e6e4e2"/><rect x="36.0" y="9.2" width="9.2" height="9.4" fill="#dcdbde"/><rect x="45.0" y="9.2" width="9.2" height="9.4" fill="#d0d2d4"/><rect x="54.0" y="9.2" width="9.2" height="9.4" fill="#dadadb"/><rect x="63.0" y="9.2" width="9.2" height="9.4" fill="#ddd8e0"/><rect x="72.0" y="9.2" width="9.2" height="9.4" fill="#d6d7dd"/><rect x="81.0" y="9.2" width="9.2" height="9.4" fill="#cfc8d2"/></svg>
<svg class="a" style="left:389.0px;top:249.8px" width="81.5" height="9.2" viewBox="0 0 81.5 9.2" shape-rendering="crispEdges"><rect x="0.0" y="0.0" width="9.2" height="9.4" fill="#e6e5e3"/><rect x="9.1" y="0.0" width="9.2" height="9.4" fill="#efede6"/><rect x="18.1" y="0.0" width="9.2" height="9.4" fill="#e2e2e0"/><rect x="27.2" y="0.0" width="9.2" height="9.4" fill="#e5e5e6"/><rect x="36.2" y="0.0" width="9.2" height="9.4" fill="#cfcfd2"/><rect x="45.2" y="0.0" width="9.2" height="9.4" fill="#e3e6ea"/><rect x="54.3" y="0.0" width="9.2" height="9.4" fill="#eaeeea"/><rect x="63.4" y="0.0" width="9.2" height="9.4" fill="#d3d6da"/><rect x="72.4" y="0.0" width="9.2" height="9.4" fill="#f2eeee"/></svg>
<svg class="a" style="left:389.0px;top:288.2px" width="81.5" height="18.4" viewBox="0 0 81.5 18.4" shape-rendering="crispEdges"><rect x="0.0" y="0.0" width="9.2" height="9.4" fill="#d4d2cf"/><rect x="9.1" y="0.0" width="9.2" height="9.4" fill="#e7e3d7"/><rect x="18.1" y="0.0" width="9.2" height="9.4" fill="#cfcfcb"/><rect x="27.2" y="0.0" width="9.2" height="9.4" fill="#dcdcde"/><rect x="36.2" y="0.0" width="9.2" height="9.4" fill="#bbbbbf"/><rect x="45.2" y="0.0" width="9.2" height="9.4" fill="#d8dce2"/><rect x="54.3" y="0.0" width="9.2" height="9.4" fill="#e2e8e2"/><rect x="63.4" y="0.0" width="9.2" height="9.4" fill="#bfc3c8"/><rect x="72.4" y="0.0" width="9.2" height="9.4" fill="#ebe4e4"/><rect x="0.0" y="9.2" width="9.2" height="9.4" fill="#f7f7f6"/><rect x="9.1" y="9.2" width="9.2" height="9.4" fill="#f9f8f4"/><rect x="18.1" y="9.2" width="9.2" height="9.4" fill="#f0f0ef"/><rect x="27.2" y="9.2" width="9.2" height="9.4" fill="#f3f3f4"/><rect x="36.2" y="9.2" width="9.2" height="9.4" fill="#eaeaec"/><rect x="45.2" y="9.2" width="9.2" height="9.4" fill="#f3f4f7"/><rect x="54.3" y="9.2" width="9.2" height="9.4" fill="#f8faf8"/><rect x="63.4" y="9.2" width="9.2" height="9.4" fill="#eaecee"/><rect x="72.4" y="9.2" width="9.2" height="9.4" fill="#f7f4f4"/></svg>
<div class="t td" style="left:390.8px;top:323.6px;font-size:11.2px">70012</div>
<svg class="a" style="left:416.6px;top:321.2px" width="54.3" height="18.4" viewBox="0 0 54.3 18.4" shape-rendering="crispEdges"><rect x="9.1" y="0.0" width="9.2" height="9.4" fill="#fbfbfb"/><rect x="18.1" y="0.0" width="9.2" height="9.4" fill="#f6f6f6"/><rect x="27.2" y="0.0" width="9.2" height="9.4" fill="#f3f3f4"/><rect x="36.2" y="0.0" width="9.2" height="9.4" fill="#f2f2f2"/><rect x="45.2" y="0.0" width="9.2" height="9.4" fill="#f8f8f8"/><rect x="9.1" y="9.2" width="9.2" height="9.4" fill="#d0d0d4"/><rect x="18.1" y="9.2" width="9.2" height="9.4" fill="#dadadc"/><rect x="27.2" y="9.2" width="9.2" height="9.4" fill="#ebecea"/><rect x="36.2" y="9.2" width="9.2" height="9.4" fill="#cdd1d6"/><rect x="45.2" y="9.2" width="9.2" height="9.4" fill="#f0eaea"/></svg>
<div class="a" style="left:414.6px;top:321.2px;width:11px;height:18.4px;background:linear-gradient(90deg,rgba(255,255,255,0),rgba(250,250,250,.95) 45%,#ececee)"></div>
<svg class="a" style="left:389.0px;top:367.0px" width="81.5" height="9.2" viewBox="0 0 81.5 9.2" shape-rendering="crispEdges"><rect x="0.0" y="0.0" width="9.2" height="9.4" fill="#d6d4d1"/><rect x="9.1" y="0.0" width="9.2" height="9.4" fill="#ebe7db"/><rect x="18.1" y="0.0" width="9.2" height="9.4" fill="#cececa"/><rect x="27.2" y="0.0" width="9.2" height="9.4" fill="#d8d8da"/><rect x="36.2" y="0.0" width="9.2" height="9.4" fill="#b6b6ba"/><rect x="45.2" y="0.0" width="9.2" height="9.4" fill="#d2d6dc"/><rect x="54.3" y="0.0" width="9.2" height="9.4" fill="#dce2dc"/><rect x="63.4" y="0.0" width="9.2" height="9.4" fill="#bec2c7"/><rect x="72.4" y="0.0" width="9.2" height="9.4" fill="#eae3e3"/></svg>
<svg class="a" style="left:389.0px;top:404.0px" width="81.5" height="18.4" viewBox="0 0 81.5 18.4" shape-rendering="crispEdges"><rect x="0.0" y="0.0" width="9.2" height="9.4" fill="#d6d4d1"/><rect x="9.1" y="0.0" width="9.2" height="9.4" fill="#e5e1d5"/><rect x="18.1" y="0.0" width="9.2" height="9.4" fill="#d2d2ce"/><rect x="27.2" y="0.0" width="9.2" height="9.4" fill="#d9d9db"/><rect x="36.2" y="0.0" width="9.2" height="9.4" fill="#b9b9bd"/><rect x="45.2" y="0.0" width="9.2" height="9.4" fill="#d5d9df"/><rect x="54.3" y="0.0" width="9.2" height="9.4" fill="#e3e9e3"/><rect x="63.4" y="0.0" width="9.2" height="9.4" fill="#bcc0c5"/><rect x="72.4" y="0.0" width="9.2" height="9.4" fill="#efe8e8"/><rect x="0.0" y="9.2" width="9.2" height="9.4" fill="#f8f8f7"/><rect x="9.1" y="9.2" width="9.2" height="9.4" fill="#f6f5f1"/><rect x="18.1" y="9.2" width="9.2" height="9.4" fill="#f3f3f2"/><rect x="27.2" y="9.2" width="9.2" height="9.4" fill="#f5f5f6"/><rect x="36.2" y="9.2" width="9.2" height="9.4" fill="#e9e9eb"/><rect x="45.2" y="9.2" width="9.2" height="9.4" fill="#f1f2f5"/><rect x="54.3" y="9.2" width="9.2" height="9.4" fill="#f8faf8"/><rect x="63.4" y="9.2" width="9.2" height="9.4" fill="#ebedef"/><rect x="72.4" y="9.2" width="9.2" height="9.4" fill="#f7f4f4"/></svg>
<svg class="a" style="left:389.0px;top:440.8px" width="81.5" height="18.4" viewBox="0 0 81.5 18.4" shape-rendering="crispEdges"><rect x="0.0" y="0.0" width="9.2" height="9.4" fill="#d9d7d4"/><rect x="9.1" y="0.0" width="9.2" height="9.4" fill="#ebe7db"/><rect x="18.1" y="0.0" width="9.2" height="9.4" fill="#d6d6d2"/><rect x="27.2" y="0.0" width="9.2" height="9.4" fill="#d6d6d8"/><rect x="36.2" y="0.0" width="9.2" height="9.4" fill="#bcbcc0"/><rect x="45.2" y="0.0" width="9.2" height="9.4" fill="#d5d9df"/><rect x="54.3" y="0.0" width="9.2" height="9.4" fill="#e4eae4"/><rect x="63.4" y="0.0" width="9.2" height="9.4" fill="#bec2c7"/><rect x="72.4" y="0.0" width="9.2" height="9.4" fill="#f0e9e9"/><rect x="0.0" y="9.2" width="9.2" height="9.4" fill="#f5f5f4"/><rect x="9.1" y="9.2" width="9.2" height="9.4" fill="#faf9f5"/><rect x="18.1" y="9.2" width="9.2" height="9.4" fill="#f3f3f2"/><rect x="27.2" y="9.2" width="9.2" height="9.4" fill="#f5f5f6"/><rect x="36.2" y="9.2" width="9.2" height="9.4" fill="#e8e8ea"/><rect x="45.2" y="9.2" width="9.2" height="9.4" fill="#f1f2f5"/><rect x="54.3" y="9.2" width="9.2" height="9.4" fill="#f6f8f6"/><rect x="63.4" y="9.2" width="9.2" height="9.4" fill="#e9ebed"/><rect x="72.4" y="9.2" width="9.2" height="9.4" fill="#f9f6f6"/></svg>
<svg class="a" style="left:389.0px;top:477.3px" width="81.5" height="18.4" viewBox="0 0 81.5 18.4" shape-rendering="crispEdges"><rect x="0.0" y="0.0" width="9.2" height="9.4" fill="#d8d6d3"/><rect x="9.1" y="0.0" width="9.2" height="9.4" fill="#e8e4d8"/><rect x="18.1" y="0.0" width="9.2" height="9.4" fill="#d1d1cd"/><rect x="27.2" y="0.0" width="9.2" height="9.4" fill="#d7d7d9"/><rect x="36.2" y="0.0" width="9.2" height="9.4" fill="#b5b5b9"/><rect x="45.2" y="0.0" width="9.2" height="9.4" fill="#d4d8de"/><rect x="54.3" y="0.0" width="9.2" height="9.4" fill="#dfe5df"/><rect x="63.4" y="0.0" width="9.2" height="9.4" fill="#bdc1c6"/><rect x="72.4" y="0.0" width="9.2" height="9.4" fill="#e9e2e2"/><rect x="0.0" y="9.2" width="9.2" height="9.4" fill="#f6f6f5"/><rect x="9.1" y="9.2" width="9.2" height="9.4" fill="#f9f8f4"/><rect x="18.1" y="9.2" width="9.2" height="9.4" fill="#efefee"/><rect x="27.2" y="9.2" width="9.2" height="9.4" fill="#f4f4f5"/><rect x="36.2" y="9.2" width="9.2" height="9.4" fill="#eaeaec"/><rect x="45.2" y="9.2" width="9.2" height="9.4" fill="#f4f5f8"/><rect x="54.3" y="9.2" width="9.2" height="9.4" fill="#f5f7f5"/><rect x="63.4" y="9.2" width="9.2" height="9.4" fill="#e9ebed"/><rect x="72.4" y="9.2" width="9.2" height="9.4" fill="#faf7f7"/></svg>
<svg class="a" style="left:389.0px;top:514.0px" width="81.5" height="18.4" viewBox="0 0 81.5 18.4" shape-rendering="crispEdges"><rect x="0.0" y="0.0" width="9.2" height="9.4" fill="#e5e3e1"/><rect x="9.1" y="0.0" width="9.2" height="9.4" fill="#f0eee6"/><rect x="18.1" y="0.0" width="9.2" height="9.4" fill="#e1e1df"/><rect x="27.2" y="0.0" width="9.2" height="9.4" fill="#e5e5e6"/><rect x="36.2" y="0.0" width="9.2" height="9.4" fill="#d0d0d3"/><rect x="45.2" y="0.0" width="9.2" height="9.4" fill="#e4e6ea"/><rect x="54.3" y="0.0" width="9.2" height="9.4" fill="#eaeeea"/><rect x="63.4" y="0.0" width="9.2" height="9.4" fill="#d5d8db"/><rect x="72.4" y="0.0" width="9.2" height="9.4" fill="#f2eeee"/><rect x="0.0" y="9.2" width="9.2" height="9.4" fill="#efeeed"/><rect x="9.1" y="9.2" width="9.2" height="9.4" fill="#f6f4ef"/><rect x="18.1" y="9.2" width="9.2" height="9.4" fill="#ededeb"/><rect x="27.2" y="9.2" width="9.2" height="9.4" fill="#efeff0"/><rect x="36.2" y="9.2" width="9.2" height="9.4" fill="#e2e2e4"/><rect x="45.2" y="9.2" width="9.2" height="9.4" fill="#eef0f2"/><rect x="54.3" y="9.2" width="9.2" height="9.4" fill="#f2f5f2"/><rect x="63.4" y="9.2" width="9.2" height="9.4" fill="#e5e7e9"/><rect x="72.4" y="9.2" width="9.2" height="9.4" fill="#f7f4f4"/></svg>
<svg class="a" style="left:389.0px;top:551.2px" width="81.5" height="18.4" viewBox="0 0 81.5 18.4" shape-rendering="crispEdges"><rect x="0.0" y="0.0" width="9.2" height="9.4" fill="#e9e7e6"/><rect x="9.1" y="0.0" width="9.2" height="9.4" fill="#f2f0ea"/><rect x="18.1" y="0.0" width="9.2" height="9.4" fill="#e6e6e4"/><rect x="27.2" y="0.0" width="9.2" height="9.4" fill="#e9e9ea"/><rect x="36.2" y="0.0" width="9.2" height="9.4" fill="#d7d7da"/><rect x="45.2" y="0.0" width="9.2" height="9.4" fill="#e8eaed"/><rect x="54.3" y="0.0" width="9.2" height="9.4" fill="#edf1ed"/><rect x="63.4" y="0.0" width="9.2" height="9.4" fill="#dbdee0"/><rect x="72.4" y="0.0" width="9.2" height="9.4" fill="#f4f0f0"/><rect x="0.0" y="9.2" width="9.2" height="9.4" fill="#ebeae8"/><rect x="9.1" y="9.2" width="9.2" height="9.4" fill="#f4f2ec"/><rect x="18.1" y="9.2" width="9.2" height="9.4" fill="#e8e8e6"/><rect x="27.2" y="9.2" width="9.2" height="9.4" fill="#ebebec"/><rect x="36.2" y="9.2" width="9.2" height="9.4" fill="#dbdbdd"/><rect x="45.2" y="9.2" width="9.2" height="9.4" fill="#eaecef"/><rect x="54.3" y="9.2" width="9.2" height="9.4" fill="#eff2ef"/><rect x="63.4" y="9.2" width="9.2" height="9.4" fill="#dfe1e3"/><rect x="72.4" y="9.2" width="9.2" height="9.4" fill="#f5f2f2"/></svg>
<svg class="a" style="left:389.0px;top:588.1px" width="81.5" height="18.4" viewBox="0 0 81.5 18.4" shape-rendering="crispEdges"><rect x="0.0" y="0.0" width="9.2" height="9.4" fill="#e9e7e6"/><rect x="9.1" y="0.0" width="9.2" height="9.4" fill="#f2f0ea"/><rect x="18.1" y="0.0" width="9.2" height="9.4" fill="#e6e6e4"/><rect x="27.2" y="0.0" width="9.2" height="9.4" fill="#e9e9ea"/><rect x="36.2" y="0.0" width="9.2" height="9.4" fill="#d7d7da"/><rect x="45.2" y="0.0" width="9.2" height="9.4" fill="#e8eaed"/><rect x="54.3" y="0.0" width="9.2" height="9.4" fill="#edf1ed"/><rect x="63.4" y="0.0" width="9.2" height="9.4" fill="#dbdee0"/><rect x="72.4" y="0.0" width="9.2" height="9.4" fill="#f4f0f0"/><rect x="0.0" y="9.2" width="9.2" height="9.4" fill="#ebeae8"/><rect x="9.1" y="9.2" width="9.2" height="9.4" fill="#f4f2ec"/><rect x="18.1" y="9.2" width="9.2" height="9.4" fill="#e8e8e6"/><rect x="27.2" y="9.2" width="9.2" height="9.4" fill="#ebebec"/><rect x="36.2" y="9.2" width="9.2" height="9.4" fill="#dbdbdd"/><rect x="45.2" y="9.2" width="9.2" height="9.4" fill="#eaecef"/><rect x="54.3" y="9.2" width="9.2" height="9.4" fill="#eff2ef"/><rect x="63.4" y="9.2" width="9.2" height="9.4" fill="#dfe1e3"/><rect x="72.4" y="9.2" width="9.2" height="9.4" fill="#f5f2f2"/></svg>
<svg class="a" style="left:1038.5px;top:249.6px" width="45.5" height="9.4" viewBox="0 0 45.5 9.4" shape-rendering="crispEdges"><rect x="0.0" y="0.0" width="9.3" height="9.6" fill="#e3dcd5"/><rect x="9.1" y="0.0" width="9.3" height="9.6" fill="#d1cfcd"/><rect x="18.2" y="0.0" width="9.3" height="9.6" fill="#c4beb9"/><rect x="27.3" y="0.0" width="9.3" height="9.6" fill="#c9d6e5"/><rect x="36.4" y="0.0" width="9.3" height="9.6" fill="#dedede"/></svg>
<svg class="a" style="left:1038.5px;top:288.0px" width="45.5" height="18.8" viewBox="0 0 45.5 18.8" shape-rendering="crispEdges"><rect x="0.0" y="0.0" width="9.3" height="9.6" fill="#e6dfd8"/><rect x="9.1" y="0.0" width="9.3" height="9.6" fill="#d1cfcd"/><rect x="18.2" y="0.0" width="9.3" height="9.6" fill="#c8c2bd"/><rect x="27.3" y="0.0" width="9.3" height="9.6" fill="#c8d5e4"/><rect x="36.4" y="0.0" width="9.3" height="9.6" fill="#e8e8e8"/><rect x="0.0" y="9.4" width="9.3" height="9.6" fill="#f3efec"/><rect x="9.1" y="9.4" width="9.3" height="9.6" fill="#edeceb"/><rect x="18.2" y="9.4" width="9.3" height="9.6" fill="#e7e4e2"/><rect x="27.3" y="9.4" width="9.3" height="9.6" fill="#e4eaf1"/><rect x="36.4" y="9.4" width="9.3" height="9.6" fill="#f4f4f4"/></svg>
<svg class="a" style="left:1038.5px;top:321.6px" width="45.5" height="18.8" viewBox="0 0 45.5 18.8" shape-rendering="crispEdges"><rect x="0.0" y="0.0" width="9.3" height="9.6" fill="#fdfdfd"/><rect x="9.1" y="0.0" width="9.3" height="9.6" fill="#ffffff"/><rect x="18.2" y="0.0" width="9.3" height="9.6" fill="#f1efee"/><rect x="27.3" y="0.0" width="9.3" height="9.6" fill="#eeedec"/><rect x="36.4" y="0.0" width="9.3" height="9.6" fill="#f5f5f5"/><rect x="0.0" y="9.4" width="9.3" height="9.6" fill="#e9e2db"/><rect x="9.1" y="9.4" width="9.3" height="9.6" fill="#dbd9d7"/><rect x="18.2" y="9.4" width="9.3" height="9.6" fill="#c1bbb6"/><rect x="27.3" y="9.4" width="9.3" height="9.6" fill="#c9d6e5"/><rect x="36.4" y="9.4" width="9.3" height="9.6" fill="#e4e4e4"/></svg>
<svg class="a" style="left:1038.5px;top:366.8px" width="45.5" height="18.8" viewBox="0 0 45.5 18.8" shape-rendering="crispEdges"><rect x="0.0" y="0.0" width="9.3" height="9.6" fill="#ede6df"/><rect x="9.1" y="0.0" width="9.3" height="9.6" fill="#d2d0ce"/><rect x="18.2" y="0.0" width="9.3" height="9.6" fill="#c2bcb7"/><rect x="27.3" y="0.0" width="9.3" height="9.6" fill="#c0cddc"/><rect x="36.4" y="0.0" width="9.3" height="9.6" fill="#e9e9e9"/><rect x="0.0" y="9.4" width="9.3" height="9.6" fill="#f1edea"/><rect x="9.1" y="9.4" width="9.3" height="9.6" fill="#e9e8e7"/><rect x="18.2" y="9.4" width="9.3" height="9.6" fill="#e9e6e4"/><rect x="27.3" y="9.4" width="9.3" height="9.6" fill="#e5ebf2"/><rect x="36.4" y="9.4" width="9.3" height="9.6" fill="#f2f2f2"/></svg>
<svg class="a" style="left:1038.5px;top:403.8px" width="45.5" height="18.8" viewBox="0 0 45.5 18.8" shape-rendering="crispEdges"><rect x="0.0" y="0.0" width="9.3" height="9.6" fill="#e8e1da"/><rect x="9.1" y="0.0" width="9.3" height="9.6" fill="#d1cfcd"/><rect x="18.2" y="0.0" width="9.3" height="9.6" fill="#bcb6b1"/><rect x="27.3" y="0.0" width="9.3" height="9.6" fill="#c2cfde"/><rect x="36.4" y="0.0" width="9.3" height="9.6" fill="#e8e8e8"/><rect x="0.0" y="9.4" width="9.3" height="9.6" fill="#f4f0ed"/><rect x="9.1" y="9.4" width="9.3" height="9.6" fill="#e9e8e7"/><rect x="18.2" y="9.4" width="9.3" height="9.6" fill="#e4e1df"/><rect x="27.3" y="9.4" width="9.3" height="9.6" fill="#e5ebf2"/><rect x="36.4" y="9.4" width="9.3" height="9.6" fill="#f5f5f5"/></svg>
<svg class="a" style="left:1038.5px;top:440.6px" width="45.5" height="18.8" viewBox="0 0 45.5 18.8" shape-rendering="crispEdges"><rect x="0.0" y="0.0" width="9.3" height="9.6" fill="#e5ded7"/><rect x="9.1" y="0.0" width="9.3" height="9.6" fill="#d5d3d1"/><rect x="18.2" y="0.0" width="9.3" height="9.6" fill="#bfb9b4"/><rect x="27.3" y="0.0" width="9.3" height="9.6" fill="#c7d4e3"/><rect x="36.4" y="0.0" width="9.3" height="9.6" fill="#e4e4e4"/><rect x="0.0" y="9.4" width="9.3" height="9.6" fill="#f4f0ed"/><rect x="9.1" y="9.4" width="9.3" height="9.6" fill="#eae9e8"/><rect x="18.2" y="9.4" width="9.3" height="9.6" fill="#e7e4e2"/><rect x="27.3" y="9.4" width="9.3" height="9.6" fill="#e3e9f0"/><rect x="36.4" y="9.4" width="9.3" height="9.6" fill="#f3f3f3"/></svg>
<svg class="a" style="left:1038.5px;top:477.1px" width="45.5" height="18.8" viewBox="0 0 45.5 18.8" shape-rendering="crispEdges"><rect x="0.0" y="0.0" width="9.3" height="9.6" fill="#e9e2db"/><rect x="9.1" y="0.0" width="9.3" height="9.6" fill="#d7d5d3"/><rect x="18.2" y="0.0" width="9.3" height="9.6" fill="#c6c0bb"/><rect x="27.3" y="0.0" width="9.3" height="9.6" fill="#c0cddc"/><rect x="36.4" y="0.0" width="9.3" height="9.6" fill="#e9e9e9"/><rect x="0.0" y="9.4" width="9.3" height="9.6" fill="#f0ece9"/><rect x="9.1" y="9.4" width="9.3" height="9.6" fill="#efeeed"/><rect x="18.2" y="9.4" width="9.3" height="9.6" fill="#e6e3e1"/><rect x="27.3" y="9.4" width="9.3" height="9.6" fill="#e7edf4"/><rect x="36.4" y="9.4" width="9.3" height="9.6" fill="#f0f0f0"/></svg>
<svg class="a" style="left:1038.5px;top:513.8px" width="45.5" height="18.8" viewBox="0 0 45.5 18.8" shape-rendering="crispEdges"><rect x="0.0" y="0.0" width="9.3" height="9.6" fill="#e2dbd4"/><rect x="9.1" y="0.0" width="9.3" height="9.6" fill="#d9d7d5"/><rect x="18.2" y="0.0" width="9.3" height="9.6" fill="#bdb7b2"/><rect x="27.3" y="0.0" width="9.3" height="9.6" fill="#c8d5e4"/><rect x="36.4" y="0.0" width="9.3" height="9.6" fill="#e1e1e1"/><rect x="0.0" y="9.4" width="9.3" height="9.6" fill="#f2eeeb"/><rect x="9.1" y="9.4" width="9.3" height="9.6" fill="#ecebea"/><rect x="18.2" y="9.4" width="9.3" height="9.6" fill="#e6e3e1"/><rect x="27.3" y="9.4" width="9.3" height="9.6" fill="#e7edf4"/><rect x="36.4" y="9.4" width="9.3" height="9.6" fill="#f0f0f0"/></svg>
<svg class="a" style="left:1038.5px;top:551.0px" width="45.5" height="18.8" viewBox="0 0 45.5 18.8" shape-rendering="crispEdges"><rect x="0.0" y="0.0" width="9.3" height="9.6" fill="#ede6df"/><rect x="9.1" y="0.0" width="9.3" height="9.6" fill="#d3d1cf"/><rect x="18.2" y="0.0" width="9.3" height="9.6" fill="#c6c0bb"/><rect x="27.3" y="0.0" width="9.3" height="9.6" fill="#c3d0df"/><rect x="36.4" y="0.0" width="9.3" height="9.6" fill="#dedede"/><rect x="0.0" y="9.4" width="9.3" height="9.6" fill="#f0ece9"/><rect x="9.1" y="9.4" width="9.3" height="9.6" fill="#ebeae9"/><rect x="18.2" y="9.4" width="9.3" height="9.6" fill="#e5e2e0"/><rect x="27.3" y="9.4" width="9.3" height="9.6" fill="#e5ebf2"/><rect x="36.4" y="9.4" width="9.3" height="9.6" fill="#f2f2f2"/></svg>
<svg class="a" style="left:1038.5px;top:587.9px" width="45.5" height="18.8" viewBox="0 0 45.5 18.8" shape-rendering="crispEdges"><rect x="0.0" y="0.0" width="9.3" height="9.6" fill="#e9e2db"/><rect x="9.1" y="0.0" width="9.3" height="9.6" fill="#d8d6d4"/><rect x="18.2" y="0.0" width="9.3" height="9.6" fill="#c4beb9"/><rect x="27.3" y="0.0" width="9.3" height="9.6" fill="#c3d0df"/><rect x="36.4" y="0.0" width="9.3" height="9.6" fill="#e6e6e6"/><rect x="0.0" y="9.4" width="9.3" height="9.6" fill="#f4f0ed"/><rect x="9.1" y="9.4" width="9.3" height="9.6" fill="#efeeed"/><rect x="18.2" y="9.4" width="9.3" height="9.6" fill="#e3e0de"/><rect x="27.3" y="9.4" width="9.3" height="9.6" fill="#e8eef5"/><rect x="36.4" y="9.4" width="9.3" height="9.6" fill="#f3f3f3"/></svg>
<svg class="a" style="left:858.0px;top:277.5px" width="172.0" height="27.0" viewBox="0 0 172.0 27.0" shape-rendering="crispEdges"><rect x="9.1" y="0.0" width="9.2" height="9.2" fill="#edeef4"/><rect x="18.1" y="0.0" width="9.2" height="9.2" fill="#ececf0"/><rect x="27.2" y="0.0" width="9.2" height="9.2" fill="#e0e3ea"/><rect x="36.2" y="0.0" width="9.2" height="9.2" fill="#e5e8ef"/><rect x="45.2" y="0.0" width="9.2" height="9.2" fill="#e7e9f1"/><rect x="54.3" y="0.0" width="9.2" height="9.2" fill="#ececf0"/><rect x="63.4" y="0.0" width="9.2" height="9.2" fill="#e5e8ef"/><rect x="72.4" y="0.0" width="9.2" height="9.2" fill="#e2e5ec"/><rect x="81.5" y="0.0" width="9.2" height="9.2" fill="#f2f2f6"/><rect x="90.5" y="0.0" width="9.2" height="9.2" fill="#f0f0f4"/><rect x="99.6" y="0.0" width="9.2" height="9.2" fill="#f0eff3"/><rect x="108.6" y="0.0" width="9.2" height="9.2" fill="#efeef2"/><rect x="117.7" y="0.0" width="9.2" height="9.2" fill="#f0eff3"/><rect x="126.7" y="0.0" width="9.2" height="9.2" fill="#ecebef"/><rect x="135.8" y="0.0" width="9.2" height="9.2" fill="#e5e6ec"/><rect x="144.8" y="0.0" width="9.2" height="9.2" fill="#e0e2ea"/><rect x="153.9" y="0.0" width="9.2" height="9.2" fill="#e6e8f0"/><rect x="162.9" y="0.0" width="9.2" height="9.2" fill="#dee1e8"/><rect x="0.0" y="9.0" width="9.2" height="9.2" fill="#dadde7"/><rect x="9.1" y="9.0" width="9.2" height="9.2" fill="#b9bdcc"/><rect x="18.1" y="9.0" width="9.2" height="9.2" fill="#d0d3dd"/><rect x="27.2" y="9.0" width="9.2" height="9.2" fill="#d8d4da"/><rect x="36.2" y="9.0" width="9.2" height="9.2" fill="#cbc2ce"/><rect x="45.2" y="9.0" width="9.2" height="9.2" fill="#d2ced4"/><rect x="54.3" y="9.0" width="9.2" height="9.2" fill="#d5d9e5"/><rect x="63.4" y="9.0" width="9.2" height="9.2" fill="#c9c0cc"/><rect x="72.4" y="9.0" width="9.2" height="9.2" fill="#dbd7dd"/><rect x="81.5" y="9.0" width="9.2" height="9.2" fill="#c9cdd9"/><rect x="90.5" y="9.0" width="9.2" height="9.2" fill="#c0c4d3"/><rect x="99.6" y="9.0" width="9.2" height="9.2" fill="#ccd0dc"/><rect x="108.6" y="9.0" width="9.2" height="9.2" fill="#c2c8d7"/><rect x="117.7" y="9.0" width="9.2" height="9.2" fill="#afb7c8"/><rect x="126.7" y="9.0" width="9.2" height="9.2" fill="#d6d9e3"/><rect x="135.8" y="9.0" width="9.2" height="9.2" fill="#b8c0d1"/><rect x="144.8" y="9.0" width="9.2" height="9.2" fill="#c0c4d3"/><rect x="153.9" y="9.0" width="9.2" height="9.2" fill="#cddae8"/><rect x="162.9" y="9.0" width="9.2" height="9.2" fill="#bec2d1"/><rect x="0.0" y="18.0" width="9.2" height="9.2" fill="#c9ccd6"/><rect x="9.1" y="18.0" width="9.2" height="9.2" fill="#a3aabc"/><rect x="18.1" y="18.0" width="9.2" height="9.2" fill="#c6cad6"/><rect x="27.2" y="18.0" width="9.2" height="9.2" fill="#e6e8ee"/><rect x="36.2" y="18.0" width="9.2" height="9.2" fill="#8e95a8"/><rect x="45.2" y="18.0" width="9.2" height="9.2" fill="#eef1f6"/></svg>
<svg class="a" style="left:858.0px;top:321.5px" width="172.0" height="27.0" viewBox="0 0 172.0 27.0" shape-rendering="crispEdges"><rect x="0.0" y="0.0" width="9.2" height="9.2" fill="#b2bacb"/><rect x="9.1" y="0.0" width="9.2" height="9.2" fill="#b1b9ca"/><rect x="18.1" y="0.0" width="9.2" height="9.2" fill="#c8bfcb"/><rect x="27.2" y="0.0" width="9.2" height="9.2" fill="#9ea9bf"/><rect x="36.2" y="0.0" width="9.2" height="9.2" fill="#d3d6e0"/><rect x="45.2" y="0.0" width="9.2" height="9.2" fill="#aaa6b6"/><rect x="54.3" y="0.0" width="9.2" height="9.2" fill="#dcd8de"/><rect x="63.4" y="0.0" width="9.2" height="9.2" fill="#cfdcea"/><rect x="72.4" y="0.0" width="9.2" height="9.2" fill="#d5d1d7"/><rect x="81.5" y="0.0" width="9.2" height="9.2" fill="#9fb0c4"/><rect x="90.5" y="0.0" width="9.2" height="9.2" fill="#dcd8de"/><rect x="99.6" y="0.0" width="9.2" height="9.2" fill="#c7cddc"/><rect x="108.6" y="0.0" width="9.2" height="9.2" fill="#bdc3d2"/><rect x="117.7" y="0.0" width="9.2" height="9.2" fill="#c7d4e2"/><rect x="126.7" y="0.0" width="9.2" height="9.2" fill="#b9bdcc"/><rect x="135.8" y="0.0" width="9.2" height="9.2" fill="#bec4d3"/><rect x="144.8" y="0.0" width="9.2" height="9.2" fill="#dad6dc"/><rect x="153.9" y="0.0" width="9.2" height="9.2" fill="#c4d1df"/><rect x="162.9" y="0.0" width="9.2" height="9.2" fill="#d3d7e3"/><rect x="0.0" y="9.0" width="9.2" height="9.2" fill="#d5d6e0"/><rect x="9.1" y="9.0" width="9.2" height="9.2" fill="#c9cad8"/><rect x="18.1" y="9.0" width="9.2" height="9.2" fill="#e2e4ea"/><rect x="27.2" y="9.0" width="9.2" height="9.2" fill="#ffffff"/><rect x="36.2" y="9.0" width="9.2" height="9.2" fill="#b7bccb"/><rect x="45.2" y="9.0" width="9.2" height="9.2" fill="#f0f2f7"/><rect x="54.3" y="9.0" width="9.2" height="9.2" fill="#eef0f5"/><rect x="63.4" y="9.0" width="9.2" height="9.2" fill="#f4f5f9"/><rect x="72.4" y="9.0" width="9.2" height="9.2" fill="#f2f3f7"/><rect x="81.5" y="9.0" width="9.2" height="9.2" fill="#f3f4f8"/><rect x="90.5" y="9.0" width="9.2" height="9.2" fill="#f2f3f7"/><rect x="99.6" y="9.0" width="9.2" height="9.2" fill="#f6f6f8"/><rect x="108.6" y="9.0" width="9.2" height="9.2" fill="#f6f6f9"/><rect x="117.7" y="9.0" width="9.2" height="9.2" fill="#f9f9fb"/><rect x="126.7" y="9.0" width="9.2" height="9.2" fill="#f4f4f7"/><rect x="135.8" y="9.0" width="9.2" height="9.2" fill="#f3f3f6"/><rect x="144.8" y="9.0" width="9.2" height="9.2" fill="#edeff3"/><rect x="153.9" y="9.0" width="9.2" height="9.2" fill="#eef0f4"/><rect x="162.9" y="9.0" width="9.2" height="9.2" fill="#eaecf1"/><rect x="0.0" y="18.0" width="9.2" height="9.2" fill="#e8e9ee"/><rect x="9.1" y="18.0" width="9.2" height="9.2" fill="#dcdde6"/></svg>
<svg class="a" style="left:858.0px;top:366.2px" width="162.9" height="18.4" viewBox="0 0 162.9 18.4" shape-rendering="crispEdges"><rect x="0.0" y="0.0" width="9.2" height="9.4" fill="#e6e7ed"/><rect x="9.1" y="0.0" width="9.2" height="9.4" fill="#dddfe8"/><rect x="18.1" y="0.0" width="9.2" height="9.4" fill="#c6c8d3"/><rect x="27.2" y="0.0" width="9.2" height="9.4" fill="#aaafc1"/><rect x="36.2" y="0.0" width="9.2" height="9.4" fill="#bec0cb"/><rect x="45.2" y="0.0" width="9.2" height="9.4" fill="#c4c1cb"/><rect x="54.3" y="0.0" width="9.2" height="9.4" fill="#a2a9bd"/><rect x="63.4" y="0.0" width="9.2" height="9.4" fill="#cac7d1"/><rect x="72.4" y="0.0" width="9.2" height="9.4" fill="#9da4b8"/><rect x="81.5" y="0.0" width="9.2" height="9.4" fill="#8d8fa6"/><rect x="90.5" y="0.0" width="9.2" height="9.4" fill="#8a90a8"/><rect x="99.6" y="0.0" width="9.2" height="9.4" fill="#c4c1cb"/><rect x="108.6" y="0.0" width="9.2" height="9.4" fill="#c4c6d1"/><rect x="117.7" y="0.0" width="9.2" height="9.4" fill="#c1c3ce"/><rect x="126.7" y="0.0" width="9.2" height="9.4" fill="#b4b9c8"/><rect x="135.8" y="0.0" width="9.2" height="9.4" fill="#c7c9d4"/><rect x="144.8" y="0.0" width="9.2" height="9.4" fill="#c2c4cf"/><rect x="153.9" y="0.0" width="9.2" height="9.4" fill="#e4e9f2"/><rect x="0.0" y="9.2" width="9.2" height="9.4" fill="#eceef3"/><rect x="9.1" y="9.2" width="9.2" height="9.4" fill="#f6f7fa"/><rect x="18.1" y="9.2" width="9.2" height="9.4" fill="#e7e9ef"/><rect x="27.2" y="9.2" width="9.2" height="9.4" fill="#e7e9ef"/><rect x="36.2" y="9.2" width="9.2" height="9.4" fill="#e5e7ed"/><rect x="45.2" y="9.2" width="9.2" height="9.4" fill="#f6f7fa"/><rect x="54.3" y="9.2" width="9.2" height="9.4" fill="#eeeff3"/><rect x="63.4" y="9.2" width="9.2" height="9.4" fill="#e6e8ee"/><rect x="72.4" y="9.2" width="9.2" height="9.4" fill="#eceef3"/><rect x="81.5" y="9.2" width="9.2" height="9.4" fill="#f6f7fa"/><rect x="90.5" y="9.2" width="9.2" height="9.4" fill="#f3f4f7"/><rect x="99.6" y="9.2" width="9.2" height="9.4" fill="#e7e9ef"/><rect x="108.6" y="9.2" width="9.2" height="9.4" fill="#f2f3f7"/><rect x="117.7" y="9.2" width="9.2" height="9.4" fill="#eff0f4"/><rect x="126.7" y="9.2" width="9.2" height="9.4" fill="#edeff4"/><rect x="135.8" y="9.2" width="9.2" height="9.4" fill="#e4e6ec"/><rect x="144.8" y="9.2" width="9.2" height="9.4" fill="#f2f3f7"/></svg>
<svg class="a" style="left:858.0px;top:547.6px" width="72.4" height="18.4" viewBox="0 0 72.4 18.4" shape-rendering="crispEdges"><rect x="0.0" y="0.0" width="9.2" height="9.4" fill="#e0e1e6"/><rect x="9.1" y="0.0" width="9.2" height="9.4" fill="#d4d6dd"/><rect x="18.1" y="0.0" width="9.2" height="9.4" fill="#dedfe4"/><rect x="27.2" y="0.0" width="9.2" height="9.4" fill="#e0e1e6"/><rect x="36.2" y="0.0" width="9.2" height="9.4" fill="#e4e4e8"/><rect x="45.2" y="0.0" width="9.2" height="9.4" fill="#dddee3"/><rect x="54.3" y="0.0" width="9.2" height="9.4" fill="#dcdde2"/><rect x="63.4" y="0.0" width="9.2" height="9.4" fill="#dddee3"/><rect x="0.0" y="9.2" width="9.2" height="9.4" fill="#d8d9de"/><rect x="9.1" y="9.2" width="9.2" height="9.4" fill="#e1e1e5"/><rect x="18.1" y="9.2" width="9.2" height="9.4" fill="#dedfe4"/><rect x="27.2" y="9.2" width="9.2" height="9.4" fill="#dbdce1"/><rect x="36.2" y="9.2" width="9.2" height="9.4" fill="#d8dae1"/><rect x="45.2" y="9.2" width="9.2" height="9.4" fill="#d7d9e0"/><rect x="54.3" y="9.2" width="9.2" height="9.4" fill="#d5d7de"/><rect x="63.4" y="9.2" width="9.2" height="9.4" fill="#d5d7de"/></svg>
<svg class="a" style="left:1222.0px;top:510.4px" width="63.0" height="18.4" viewBox="0 0 63.0 18.4" shape-rendering="crispEdges"><rect x="0.0" y="0.0" width="9.2" height="9.4" fill="#e0e2e7"/><rect x="9.0" y="0.0" width="9.2" height="9.4" fill="#dbe0e5"/><rect x="18.0" y="0.0" width="9.2" height="9.4" fill="#d0d1d6"/><rect x="27.0" y="0.0" width="9.2" height="9.4" fill="#d4dbdc"/><rect x="36.0" y="0.0" width="9.2" height="9.4" fill="#e4e7ed"/><rect x="45.0" y="0.0" width="9.2" height="9.4" fill="#dde2e4"/><rect x="54.0" y="0.0" width="9.2" height="9.4" fill="#dfe6e2"/><rect x="0.0" y="9.2" width="9.2" height="9.4" fill="#f0ecef"/><rect x="9.0" y="9.2" width="9.2" height="9.4" fill="#ece6ee"/><rect x="18.0" y="9.2" width="9.2" height="9.4" fill="#e7e4ea"/><rect x="27.0" y="9.2" width="9.2" height="9.4" fill="#f2edf0"/><rect x="36.0" y="9.2" width="9.2" height="9.4" fill="#e5e1e1"/><rect x="45.0" y="9.2" width="9.2" height="9.4" fill="#f0e8ea"/><rect x="54.0" y="9.2" width="9.2" height="9.4" fill="#e5dfe9"/></svg>
<div class="a" style="left:1266px;top:200px;width:259px;height:412px;overflow:hidden"><div class="a" style="left:14px;top:0;width:245px;height:412px;background:#fff;box-shadow:-2px 0 6px rgba(0,0,0,.10)"></div></div>
<div class="a" style="left:1280px;top:200px;width:245px;height:37px;background:#f5f5f5"></div>
<div class="t th" style="left:1289.6px;top:208.5px;">操作</div>
<div class="hl" style="left:1280px;top:236.9px;width:245px"></div>
<div class="hl" style="left:1280px;top:272.9px;width:245px"></div>
<div class="hl" style="left:1280px;top:312.9px;width:245px"></div>
<div class="hl" style="left:1280px;top:353.4px;width:245px"></div>
<div class="hl" style="left:1280px;top:390.2px;width:245px"></div>
<div class="hl" style="left:1280px;top:427.4px;width:245px"></div>
<div class="hl" style="left:1280px;top:464.2px;width:245px"></div>
<div class="hl" style="left:1280px;top:500.5px;width:245px"></div>
<div class="hl" style="left:1280px;top:537.6px;width:245px"></div>
<div class="hl" style="left:1280px;top:574.6px;width:245px"></div>
<div class="hl" style="left:1280px;top:611.3px;width:245px"></div>
<div class="t lk" style="left:1290.3px;top:245.8px;">编辑</div>
<div class="t lk" style="left:1332.2px;top:245.8px;">授权</div>
<div class="t lk" style="left:1374.6px;top:245.8px;">复制</div>
<div class="t lk" style="left:1416.7px;top:245.8px;">导出设备</div>
<div class="sep" style="left:1322.4px;top:247.0px"></div>
<div class="sep" style="left:1364.6px;top:247.0px"></div>
<div class="sep" style="left:1406.8px;top:247.0px"></div>
<svg class="a" style="left:1470px;top:253.4px" width="11" height="3" viewBox="0 0 11 3" fill="#2f5fd0"><circle cx="1.5" cy="1.5" r="1.35"/><circle cx="5.4" cy="1.5" r="1.35"/><circle cx="9.3" cy="1.5" r="1.35"/></svg>
<div class="t lk" style="left:1290.3px;top:284.2px;">编辑</div>
<div class="t lk" style="left:1332.2px;top:284.2px;">授权</div>
<div class="t lk" style="left:1374.6px;top:284.2px;">复制</div>
<div class="t lk" style="left:1416.7px;top:284.2px;">导出设备</div>
<div class="sep" style="left:1322.4px;top:285.4px"></div>
<div class="sep" style="left:1364.6px;top:285.4px"></div>
<div class="sep" style="left:1406.8px;top:285.4px"></div>
<svg class="a" style="left:1470px;top:291.8px" width="11" height="3" viewBox="0 0 11 3" fill="#2f5fd0"><circle cx="1.5" cy="1.5" r="1.35"/><circle cx="5.4" cy="1.5" r="1.35"/><circle cx="9.3" cy="1.5" r="1.35"/></svg>
<div class="t lk" style="left:1290.3px;top:324.2px;">编辑</div>
<div class="t lk" style="left:1332.2px;top:324.2px;">授权</div>
<div class="t lk" style="left:1374.6px;top:324.2px;">复制</div>
<div class="t lk" style="left:1416.7px;top:324.2px;">导出设备</div>
<div class="sep" style="left:1364.6px;top:325.4px"></div>
<div class="sep" style="left:1406.8px;top:325.4px"></div>
<svg class="a" style="left:1470px;top:331.8px" width="11" height="3" viewBox="0 0 11 3" fill="#2f5fd0"><circle cx="1.5" cy="1.5" r="1.35"/><circle cx="5.4" cy="1.5" r="1.35"/><circle cx="9.3" cy="1.5" r="1.35"/></svg>
<div class="t lk" style="left:1290.3px;top:363.0px;">编辑</div>
<div class="t lk" style="left:1332.2px;top:363.0px;">授权</div>
<div class="t lk" style="left:1374.6px;top:363.0px;">复制</div>
<div class="t lk" style="left:1416.7px;top:363.0px;">导出设备</div>
<div class="sep" style="left:1322.4px;top:364.2px"></div>
<div class="sep" style="left:1364.6px;top:364.2px"></div>
<div class="sep" style="left:1406.8px;top:364.2px"></div>
<svg class="a" style="left:1470px;top:370.6px" width="11" height="3" viewBox="0 0 11 3" fill="#2f5fd0"><circle cx="1.5" cy="1.5" r="1.35"/><circle cx="5.4" cy="1.5" r="1.35"/><circle cx="9.3" cy="1.5" r="1.35"/></svg>
<div class="t lk" style="left:1290.3px;top:400.0px;">编辑</div>
<div class="t lk" style="left:1332.2px;top:400.0px;">授权</div>
<div class="t lk" style="left:1374.6px;top:400.0px;">复制</div>
<div class="t lk" style="left:1416.7px;top:400.0px;">导出设备</div>
<div class="sep" style="left:1322.4px;top:401.2px"></div>
<div class="sep" style="left:1364.6px;top:401.2px"></div>
<div class="sep" style="left:1406.8px;top:401.2px"></div>
<svg class="a" style="left:1470px;top:407.6px" width="11" height="3" viewBox="0 0 11 3" fill="#2f5fd0"><circle cx="1.5" cy="1.5" r="1.35"/><circle cx="5.4" cy="1.5" r="1.35"/><circle cx="9.3" cy="1.5" r="1.35"/></svg>
<div class="t lk" style="left:1290.3px;top:436.8px;">编辑</div>
<div class="t lk" style="left:1332.2px;top:436.8px;">授权</div>
<div class="t lk" style="left:1374.6px;top:436.8px;">复制</div>
<div class="t lk" style="left:1416.7px;top:436.8px;">导出设备</div>
<div class="sep" style="left:1322.4px;top:438.0px"></div>
<div class="sep" style="left:1364.6px;top:438.0px"></div>
<div class="sep" style="left:1406.8px;top:438.0px"></div>
<svg class="a" style="left:1470px;top:444.4px" width="11" height="3" viewBox="0 0 11 3" fill="#2f5fd0"><circle cx="1.5" cy="1.5" r="1.35"/><circle cx="5.4" cy="1.5" r="1.35"/><circle cx="9.3" cy="1.5" r="1.35"/></svg>
<div class="t lk" style="left:1290.3px;top:473.3px;">编辑</div>
<div class="t lk" style="left:1332.2px;top:473.3px;">授权</div>
<div class="t lk" style="left:1374.6px;top:473.3px;">复制</div>
<div class="t lk" style="left:1416.7px;top:473.3px;">导出设备</div>
<div class="sep" style="left:1322.4px;top:474.5px"></div>
<div class="sep" style="left:1364.6px;top:474.5px"></div>
<div class="sep" style="left:1406.8px;top:474.5px"></div>
<svg class="a" style="left:1470px;top:480.9px" width="11" height="3" viewBox="0 0 11 3" fill="#2f5fd0"><circle cx="1.5" cy="1.5" r="1.35"/><circle cx="5.4" cy="1.5" r="1.35"/><circle cx="9.3" cy="1.5" r="1.35"/></svg>
<div class="t lk" style="left:1290.3px;top:510.0px;">编辑</div>
<div class="t lk" style="left:1332.2px;top:510.0px;">授权</div>
<div class="t lk" style="left:1374.6px;top:510.0px;">复制</div>
<div class="t lk" style="left:1416.7px;top:510.0px;">导出设备</div>
<div class="sep" style="left:1322.4px;top:511.2px"></div>
<div class="sep" style="left:1364.6px;top:511.2px"></div>
<div class="sep" style="left:1406.8px;top:511.2px"></div>
<svg class="a" style="left:1470px;top:517.6px" width="11" height="3" viewBox="0 0 11 3" fill="#2f5fd0"><circle cx="1.5" cy="1.5" r="1.35"/><circle cx="5.4" cy="1.5" r="1.35"/><circle cx="9.3" cy="1.5" r="1.35"/></svg>
<div class="t lk" style="left:1290.3px;top:547.2px;">编辑</div>
<div class="t lk" style="left:1332.2px;top:547.2px;">授权</div>
<div class="t lk" style="left:1374.6px;top:547.2px;">复制</div>
<div class="t lk" style="left:1416.7px;top:547.2px;">导出设备</div>
<div class="sep" style="left:1322.4px;top:548.4px"></div>
<div class="sep" style="left:1364.6px;top:548.4px"></div>
<div class="sep" style="left:1406.8px;top:548.4px"></div>
<svg class="a" style="left:1470px;top:554.8px" width="11" height="3" viewBox="0 0 11 3" fill="#2f5fd0"><circle cx="1.5" cy="1.5" r="1.35"/><circle cx="5.4" cy="1.5" r="1.35"/><circle cx="9.3" cy="1.5" r="1.35"/></svg>
<div class="t lk" style="left:1290.3px;top:584.1px;">编辑</div>
<div class="t lk" style="left:1332.2px;top:584.1px;">授权</div>
<div class="t lk" style="left:1374.6px;top:584.1px;">复制</div>
<div class="t lk" style="left:1416.7px;top:584.1px;">导出设备</div>
<div class="sep" style="left:1322.4px;top:585.3px"></div>
<div class="sep" style="left:1364.6px;top:585.3px"></div>
<div class="sep" style="left:1406.8px;top:585.3px"></div>
<svg class="a" style="left:1470px;top:591.7px" width="11" height="3" viewBox="0 0 11 3" fill="#2f5fd0"><circle cx="1.5" cy="1.5" r="1.35"/><circle cx="5.4" cy="1.5" r="1.35"/><circle cx="9.3" cy="1.5" r="1.35"/></svg>
<div class="redbox" style="left:1282px;top:317.5px;width:41.4px;height:30.1px;border-width:3.8px;border-radius:3px"></div>
<div class="rednum" style="left:1252.6px;top:327.2px;font-size:36px;line-height:44px;transform-origin:0 50%;transform:scaleX(0.86)">3</div>
<div class="a" style="left:200px;top:613px;width:1325px;height:14px;background:#f1f1f1"></div>
<div class="a" style="left:218px;top:613px;width:1054px;height:14px;background:#c1c1c1"></div>
<svg class="a" style="left:206px;top:616px" width="5" height="8" viewBox="0 0 5 8"><path d="M5 0 L0 4 L5 8Z" fill="#8a8a8a"/></svg>
<svg class="a" style="left:1513px;top:616px" width="5" height="8" viewBox="0 0 5 8"><path d="M0 0 L5 4 L0 8Z" fill="#505050"/></svg>
<div class="a" style="left:1480px;top:614.5px;width:34px;height:34px;border-radius:50%;border:1px solid #fbf9f4;background:rgba(255,255,255,.08)"></div>
<svg class="a" style="left:1488px;top:617.5px" width="14" height="10" viewBox="0 0 14 10" fill="none" stroke="#0b3cc1" stroke-width="2.3"><path d="M2.2 10 V7 A4.6 4.6 0 0 1 11.4 7 V10"/></svg>
<svg class="a" style="left:1503px;top:620px" width="10" height="7" viewBox="0 0 10 7" fill="none" stroke="#2f5fd0" stroke-width="1.1"><path d="M2 6.5 L4.6 1.2 M5 6.8 L9 4.6"/></svg>
<div class="a" style="left:1533.6px;top:446.4px;width:12px;height:58.4px;border-radius:4px 0 0 4px;background:#4a5161;box-shadow:0 0 1px #3a4050"></div>
<div class="a" style="left:1537.6px;top:453px;width:4.3px;height:9.4px;background:repeating-linear-gradient(#2e323c 0 1.1px,#454b59 1.1px 1.9px)"></div>
<div class="a" style="left:1537.6px;top:463px;width:4.3px;height:36px;background:linear-gradient(#e0a244,#c9b84a 35%,#7fb468 65%,#35b3a2)"></div>
<div class="a" style="left:1537.6px;top:463px;width:4.3px;height:36px;background:repeating-linear-gradient(rgba(74,81,97,0) 0 1.2px,rgba(74,81,97,.45) 1.2px 1.9px)"></div>
<div class="a" style="left:0;top:0;width:1.2px;height:627px;background:#fff"></div>
</div>
<div class="a" style="left:1542.3px;top:0;width:1.7px;height:627px;background:#000"></div>
</body></html>
